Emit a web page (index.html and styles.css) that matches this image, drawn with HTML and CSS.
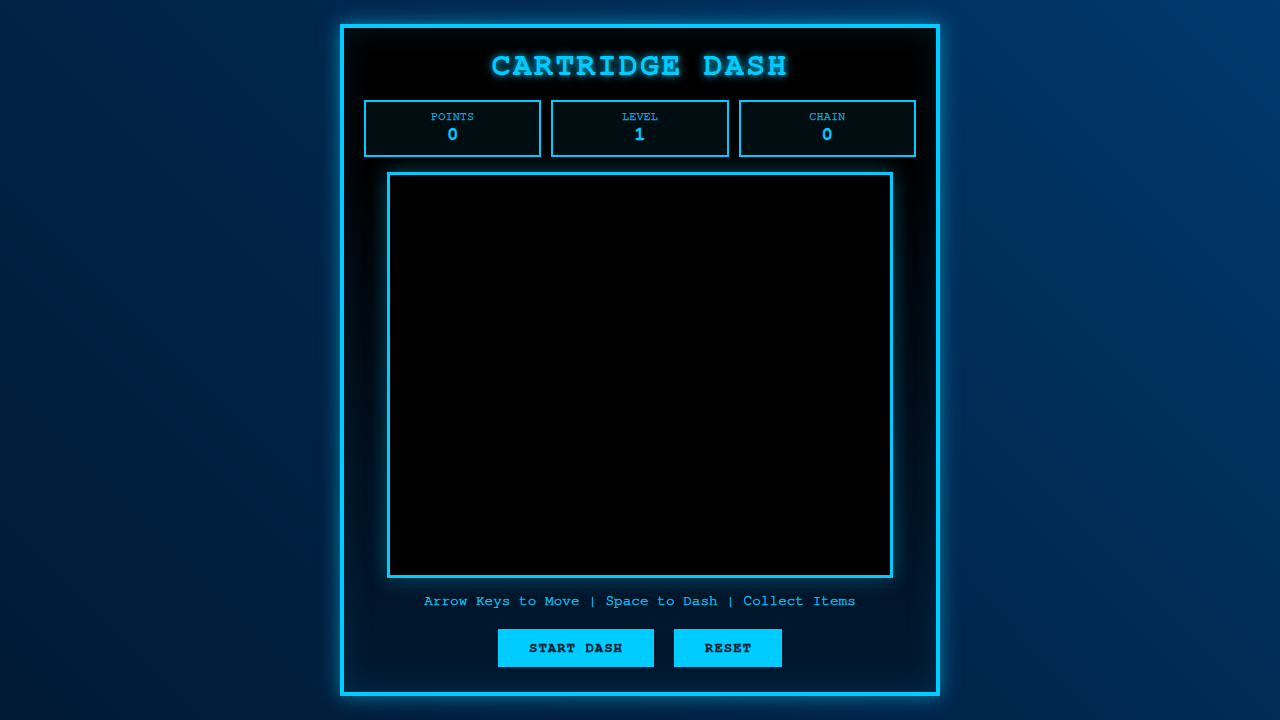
FILE: index.html
```html
<!DOCTYPE html>
<html lang="en">
<head>
<meta charset="utf-8">
<title>Cartridge Dash</title>
<link rel="stylesheet" href="styles.css">
</head>
<body>
<main class="console">
  <h1 class="title">CARTRIDGE DASH</h1>
  <section class="stats">
    <div class="stat"><div class="stat-label">POINTS</div><div class="stat-value">0</div></div>
    <div class="stat"><div class="stat-label">LEVEL</div><div class="stat-value">1</div></div>
    <div class="stat"><div class="stat-label">CHAIN</div><div class="stat-value">0</div></div>
  </section>
  <div class="screen"></div>
  <p class="help">Arrow Keys to Move | Space to Dash | Collect Items</p>
  <div class="controls">
    <button class="btn btn-start">START DASH</button>
    <button class="btn btn-reset">RESET</button>
  </div>
</main>
</body>
</html>
```
FILE: styles.css
```css
* { box-sizing: border-box; }
html, body { margin: 0; height: 100%; }
body {
  background: linear-gradient(45deg, #001a35 0%, #00264c 50%, #003a6e 100%);
  font-family: "FreeMono", "Courier New", "Liberation Mono", monospace;
  display: flex;
  justify-content: center;
  align-items: flex-start;
  padding-top: 24px;
  overflow: hidden;
}
.console {
  width: 600px;
  height: 672px;
  border: 4px solid #00ccff;
  background: linear-gradient(180deg, #000000 0%, #000000 20%, #001a33 100%);
  box-shadow: 0 0 18px rgba(0, 204, 255, 0.55), inset 0 0 30px rgba(0, 90, 140, 0.25);
  padding: 19px 20px 25px;
  display: flex;
  flex-direction: column;
  align-items: center;
}
.title {
  margin: 0 0 17px;
  font-size: 32px;
  line-height: 36px;
  font-weight: bold;
  letter-spacing: 2px;
  color: #00ccff;
  text-shadow: 0 0 7px rgba(0, 204, 255, 0.8), 0 0 12px rgba(0, 204, 255, 0.4);
}
.stats {
  width: 100%;
  display: grid;
  grid-template-columns: repeat(3, 1fr);
  gap: 10px;
}
.stat {
  height: 57px;
  border: 2px solid #00ccff;
  background: rgba(0, 204, 255, 0.07);
  display: flex;
  flex-direction: column;
  align-items: center;
  padding-top: 7px;
}
.stat-label {
  font-size: 12px;
  line-height: 14px;
  color: #0aa8dc;
  -webkit-text-stroke: 0.35px currentColor;
}
.stat-value {
  margin-top: 1px;
  font-size: 19px;
  line-height: 22px;
  font-weight: bold;
  color: #00ccff;
  -webkit-text-stroke: 0.3px currentColor;
}
.screen {
  margin-top: 15px;
  width: 506px;
  height: 406px;
  border: 3px solid #00ccff;
  background: #000;
  box-shadow: 0 0 20px rgba(0, 204, 255, 0.35);
}
.help {
  margin: 14px 0 0;
  font-size: 14.4px;
  line-height: 17px;
  color: #00c4f5;
  -webkit-text-stroke: 0.4px currentColor;
}
.controls {
  margin-top: 20px;
  display: flex;
  gap: 20px;
}
.btn {
  border: none;
  background: #00ccff;
  color: #001a33;
  font-family: inherit;
  font-size: 14px;
  line-height: 16px;
  font-weight: bold;
  letter-spacing: 1px;
  padding: 11px 31px 11px 31px;
  height: 38px;
  -webkit-text-stroke: 0.3px currentColor;
}
.btn-reset { padding-right: 30px; }
```
